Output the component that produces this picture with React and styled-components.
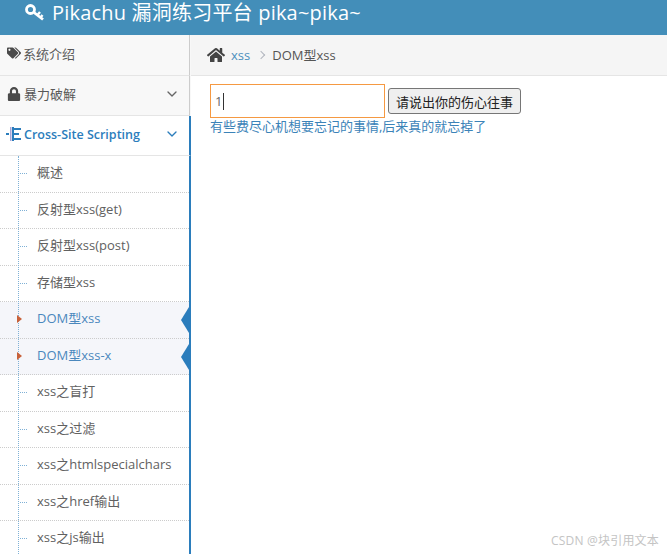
import styled, { createGlobalStyle } from "styled-components";
import { FaTags, FaLock, FaHome } from "react-icons/fa";
import { FiChevronDown } from "react-icons/fi";

const GlobalStyle = createGlobalStyle`
  html, body {
    margin: 0;
    height: 100%;
    overflow: hidden;
    background: #fff;
    font-family: "Open Sans", "Noto Sans CJK SC", sans-serif;
    font-size: 13px;
    color: #393939;
  }
`;

const Page = styled.div`
  position: relative;
  width: 667px;
  height: 554px;
  display: flex;
  flex-direction: column;
  overflow: hidden;
`;

const Navbar = styled.div`
  height: 35px;
  flex: none;
  background: #438eb9;
  color: #fff;
  display: flex;
  align-items: center;
  gap: 8px;
  padding: 0 0 12px 25px;
  box-sizing: border-box;
  font-size: 20px;
  letter-spacing: 0.2px;
`;

const Body = styled.div`
  flex: 1;
  display: flex;
  min-height: 0;
`;

const Sidebar = styled.nav`
  width: 191px;
  flex: none;
  display: flex;
  flex-direction: column;
  background: #f8f8f8;
`;

const TopItem = styled.div`
  height: ${(p) => p.$h}px;
  flex: none;
  box-sizing: border-box;
  display: flex;
  align-items: center;
  padding: 0 9px ${(p) => (p.$open ? 3 : 4)}px ${(p) => (p.$open ? 6 : 7)}px;
  gap: ${(p) => p.$gap || 0}px;
  font-size: ${(p) => (p.$open ? 12.5 : 13)}px;
  color: ${(p) => (p.$open ? "#2b7dbc" : "#585858")};
  font-weight: ${(p) => (p.$open ? 600 : 400)};
  background: ${(p) => (p.$open ? "#fff" : "#f8f8f8")};
  border-bottom: 1px solid #e5e5e5;
  border-right: ${(p) => (p.$open ? "2px solid #2b7dbc" : "1px solid #ccc")};
  margin-right: ${(p) => (p.$open ? 0 : 1)}px;
  svg.lead {
    font-size: 14px;
    color: #4a4a4a;
    flex: none;
  }
`;

const Chevron = styled(FiChevronDown)`
  margin-left: auto;
  font-size: 16px;
  color: ${(p) => p.$tint || "#666"};
  flex: none;
`;

const SubMenu = styled.ul`
  position: relative;
  list-style: none;
  margin: 0;
  padding: 0;
  flex: 1;
  background: #fff;
  border-right: 2px solid #2b7dbc;
  overflow: hidden;
  &::before {
    content: "";
    position: absolute;
    left: 18px;
    top: 0;
    bottom: 0;
    border-left: 1px dotted #7fb1d6;
    z-index: 1;
  }
`;

const SubItem = styled.li`
  position: relative;
  height: 36.5px;
  box-sizing: border-box;
  display: flex;
  align-items: center;
  padding: 0 0 4px 37px;
  font-size: 13px;
  white-space: nowrap;
  color: ${(p) => (p.$active ? "#4b88bd" : "#616161")};
  background: ${(p) => (p.$active ? "#f5f6fa" : "#fff")};
  border-bottom: 1px dotted #ccc;
  &::before {
    content: "";
    position: absolute;
    left: 20px;
    top: 17px;
    width: 7px;
    border-top: 1px dotted #7fb1d6;
    display: ${(p) => (p.$active ? "none" : "block")};
  }
`;

const Caret = styled.span`
  position: absolute;
  left: 17px;
  top: 13px;
  z-index: 2;
  border-left: 5px solid #c86139;
  border-top: 4px solid transparent;
  border-bottom: 4px solid transparent;
`;

const Notch = styled.span`
  position: absolute;
  right: 0;
  top: 5px;
  border-right: 8px solid #2b7dbc;
  border-top: 13px solid transparent;
  border-bottom: 13px solid transparent;
`;

const Main = styled.main`
  flex: 1;
  min-width: 0;
  display: flex;
  flex-direction: column;
`;

const Breadcrumbs = styled.div`
  height: 41px;
  flex: none;
  box-sizing: border-box;
  display: flex;
  align-items: center;
  padding: 0 0 1px 16px;
  background: #f5f5f5;
  border-bottom: 1px solid #e5e5e5;
  font-size: 13px;
  color: #555;
  svg {
    font-size: 18px;
    color: #444;
    margin-right: 6px;
  }
`;

const CrumbLink = styled.span`
  color: #4c8fbd;
`;

const Sep = styled.span`
  width: 5px;
  height: 5px;
  margin: 1px 8px 0 8px;
  border-top: 1px solid #b2b6bf;
  border-right: 1px solid #b2b6bf;
  transform: rotate(45deg);
`;

const Content = styled.div`
  padding: 8px 0 0 19px;
`;

const FormRow = styled.div`
  display: flex;
  align-items: center;
  gap: 3px;
`;

const Field = styled.div`
  width: 175px;
  height: 34px;
  box-sizing: border-box;
  border: 1px solid #f59942;
  display: flex;
  align-items: center;
  padding-left: 4px;
  font-size: 13px;
  color: #696969;
`;

const Cursor = styled.span`
  width: 1px;
  height: 17px;
  margin-left: 1px;
  background: #333;
`;

const Button = styled.button`
  height: 26px;
  width: 133px;
  padding: 0;
  box-sizing: border-box;
  border: 1px solid #767676;
  border-radius: 3px;
  background: #efefef;
  color: #222;
  font: 13px "Open Sans", "Noto Sans CJK SC", sans-serif;
`;

const Hint = styled.div`
  color: #3b83b8;
  font-size: 13px;
  line-height: 17px;
`;

const Watermark = styled.div`
  position: absolute;
  right: 8px;
  bottom: 5px;
  font-size: 12px;
  color: #c4c4c4;
  letter-spacing: 0.2px;
`;

const KeyIcon = () => (
  <svg width="19" height="19" viewBox="0 0 19 19" fill="none" stroke="#fff">
    <circle cx="5.5" cy="7.5" r="4" strokeWidth="2.8" />
    <path d="M9 10.5l9 7" strokeWidth="2.8" />
    <path d="M12.5 13l2.5-3M15.5 15.5l2-2.5" strokeWidth="2.4" />
  </svg>
);

const TreeIcon = () => (
  <svg className="lead" width="15" height="14" viewBox="0 0 15 14">
    <path d="M0 6h3v2H0z" fill="#2b7dbc" />
    <path d="M4 0h1.5v14H4z" fill="#a9a6d6" />
    <path d="M6 0h2v14H6zM8 1h7v2H8zM8 6h5v2H8zM8 11h7v2H8z" fill="#2b7dbc" />
  </svg>
);

const items = [
  { label: "概述" },
  { label: "反射型xss(get)" },
  { label: "反射型xss(post)" },
  { label: "存储型xss" },
  { label: "DOM型xss", active: true },
  { label: "DOM型xss-x", active: true },
  { label: "xss之盲打" },
  { label: "xss之过滤" },
  { label: "xss之htmlspecialchars" },
  { label: "xss之href输出" },
  { label: "xss之js输出" },
];

export default function App() {
  return (
    <Page>
      <GlobalStyle />
      <Navbar>
        <KeyIcon />
        <span>Pikachu 漏洞练习平台 pika~pika~</span>
      </Navbar>
      <Body>
        <Sidebar>
          <TopItem $h={41} $gap={2}>
            <FaTags className="lead" />
            系统介绍
          </TopItem>
          <TopItem $h={40} $gap={3}>
            <FaLock className="lead" />
            暴力破解
            <Chevron />
          </TopItem>
          <TopItem $h={40} $gap={3} $open>
            <TreeIcon />
            Cross-Site Scripting
            <Chevron $tint="#2b7dbc" />
          </TopItem>
          <SubMenu>
            {items.map((it) => (
              <SubItem key={it.label} $active={it.active}>
                {it.active && <Caret />}
                {it.label}
                {it.active && <Notch />}
              </SubItem>
            ))}
          </SubMenu>
        </Sidebar>
        <Main>
          <Breadcrumbs>
            <FaHome />
            <CrumbLink>xss</CrumbLink>
            <Sep />
            DOM型xss
          </Breadcrumbs>
          <Content>
            <FormRow>
              <Field>
                1<Cursor />
              </Field>
              <Button>请说出你的伤心往事</Button>
            </FormRow>
            <Hint>有些费尽心机想要忘记的事情,后来真的就忘掉了</Hint>
          </Content>
        </Main>
      </Body>
      <Watermark>CSDN @块引用文本</Watermark>
    </Page>
  );
}
